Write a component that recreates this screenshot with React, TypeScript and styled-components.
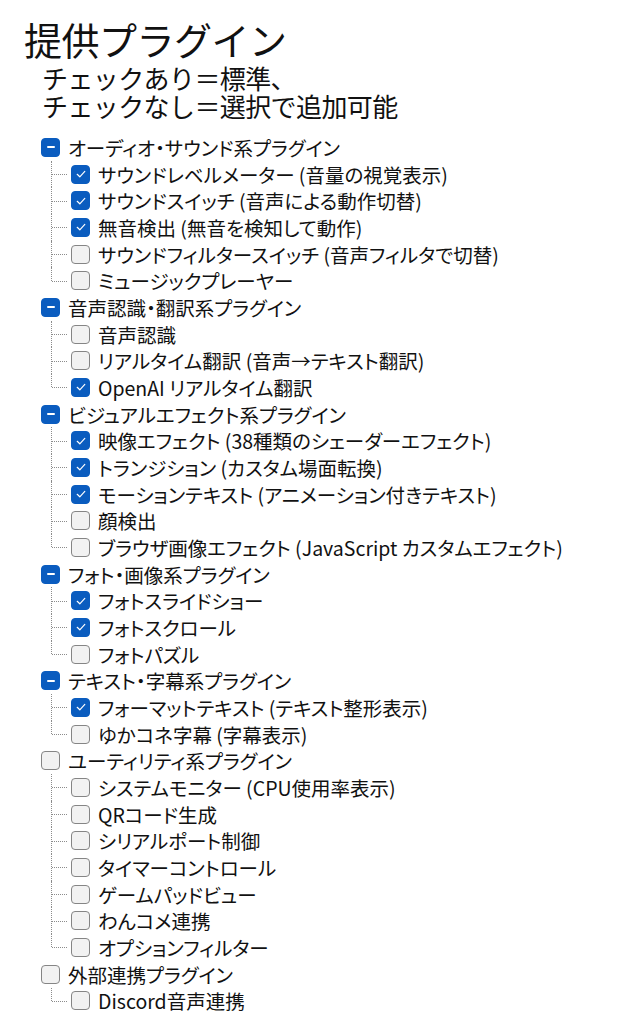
import styled, { createGlobalStyle } from "styled-components";

type State = "checked" | "unchecked" | "mixed";

interface Plugin {
  label: string;
  checked: boolean;
}

interface Group {
  label: string;
  state: State;
  items: Plugin[];
}

const groups: Group[] = [
  {
    label: "オーディオ・サウンド系プラグイン",
    state: "mixed",
    items: [
      { label: "サウンドレベルメーター (音量の視覚表示)", checked: true },
      { label: "サウンドスイッチ (音声による動作切替)", checked: true },
      { label: "無音検出 (無音を検知して動作)", checked: true },
      { label: "サウンドフィルタースイッチ (音声フィルタで切替)", checked: false },
      { label: "ミュージックプレーヤー", checked: false },
    ],
  },
  {
    label: "音声認識・翻訳系プラグイン",
    state: "mixed",
    items: [
      { label: "音声認識", checked: false },
      { label: "リアルタイム翻訳 (音声→テキスト翻訳)", checked: false },
      { label: "OpenAI リアルタイム翻訳", checked: true },
    ],
  },
  {
    label: "ビジュアルエフェクト系プラグイン",
    state: "mixed",
    items: [
      { label: "映像エフェクト (38種類のシェーダーエフェクト)", checked: true },
      { label: "トランジション (カスタム場面転換)", checked: true },
      { label: "モーションテキスト (アニメーション付きテキスト)", checked: true },
      { label: "顔検出", checked: false },
      { label: "ブラウザ画像エフェクト (JavaScript カスタムエフェクト)", checked: false },
    ],
  },
  {
    label: "フォト・画像系プラグイン",
    state: "mixed",
    items: [
      { label: "フォトスライドショー", checked: true },
      { label: "フォトスクロール", checked: true },
      { label: "フォトパズル", checked: false },
    ],
  },
  {
    label: "テキスト・字幕系プラグイン",
    state: "mixed",
    items: [
      { label: "フォーマットテキスト (テキスト整形表示)", checked: true },
      { label: "ゆかコネ字幕 (字幕表示)", checked: false },
    ],
  },
  {
    label: "ユーティリティ系プラグイン",
    state: "unchecked",
    items: [
      { label: "システムモニター (CPU使用率表示)", checked: false },
      { label: "QRコード生成", checked: false },
      { label: "シリアルポート制御", checked: false },
      { label: "タイマーコントロール", checked: false },
      { label: "ゲームパッドビュー", checked: false },
      { label: "わんコメ連携", checked: false },
      { label: "オプションフィルター", checked: false },
    ],
  },
  {
    label: "外部連携プラグイン",
    state: "unchecked",
    items: [{ label: "Discord音声連携", checked: false }],
  },
];

const ROW = 26.68;

const Global = createGlobalStyle`
  html, body {
    margin: 0;
    padding: 0;
    background: #ffffff;
  }
  body {
    font-family: "Noto Sans CJK JP", "Noto Sans", sans-serif;
    color: #111111;
  }
`;

const Page = styled.div`
  padding: 16px 0 0 24px;
`;

const Title = styled.h1`
  margin: 0;
  font-size: 38px;
  font-weight: 400;
  line-height: 46px;
  letter-spacing: -0.5px;
`;

const Note = styled.p`
  margin: 2px 0 0 18px;
  font-size: 26px;
  line-height: 28px;
  letter-spacing: -0.6px;
`;

const Tree = styled.ul`
  list-style: none;
  margin: 14px 0 0 17px;
  padding: 0;
`;

const Row = styled.div`
  display: flex;
  align-items: center;
  height: ${ROW}px;
  gap: 8px;
  font-size: 19.5px;
  font-feature-settings: "palt";
  white-space: nowrap;
`;

const Children = styled.ul`
  list-style: none;
  margin: 0;
  padding: 0;
`;

const ChildRow = styled.li`
  display: flex;
  align-items: center;
  height: ${ROW}px;
`;

const Connector = styled.span<{ $last: boolean }>`
  position: relative;
  flex: 0 0 30px;
  align-self: stretch;

  &::before {
    content: "";
    position: absolute;
    left: 10px;
    top: 0;
    height: ${(p) => (p.$last ? "50%" : "100%")};
    border-left: 1px dotted #8c8c8c;
  }

  &::after {
    content: "";
    position: absolute;
    left: 11px;
    top: 50%;
    width: 15px;
    border-top: 1px dotted #8c8c8c;
  }
`;

const Box = styled.span<{ $on: boolean }>`
  box-sizing: border-box;
  flex: 0 0 19px;
  width: 19px;
  height: 19px;
  border-radius: 4px;
  display: flex;
  align-items: center;
  justify-content: center;
  background: ${(p) => (p.$on ? "#0a5cbf" : "#f2f2f2")};
  border: 1.5px solid ${(p) => (p.$on ? "#0a5cbf" : "#858585")};
`;

const Dash = styled.span`
  width: 8px;
  height: 2px;
  border-radius: 1px;
  background: #ffffff;
`;

function Check({ state }: { state: State }) {
  return (
    <Box $on={state !== "unchecked"}>
      {state === "checked" && (
        <svg width="12" height="12" viewBox="0 0 12 12">
          <path
            d="M2.2 6.3 L4.8 8.8 L9.8 3.4"
            fill="none"
            stroke="#ffffff"
            strokeWidth="1.2"
            strokeLinecap="round"
            strokeLinejoin="round"
          />
        </svg>
      )}
      {state === "mixed" && <Dash />}
    </Box>
  );
}

export default function App() {
  return (
    <Page>
      <Global />
      <Title>提供プラグイン</Title>
      <Note>
        チェックあり＝標準、
        <br />
        チェックなし＝選択で追加可能
      </Note>
      <Tree>
        {groups.map((g) => (
          <li key={g.label}>
            <Row>
              <Check state={g.state} />
              <span>{g.label}</span>
            </Row>
            <Children>
              {g.items.map((it, i) => (
                <ChildRow key={it.label}>
                  <Connector $last={i === g.items.length - 1} />
                  <Row>
                    <Check state={it.checked ? "checked" : "unchecked"} />
                    <span>{it.label}</span>
                  </Row>
                </ChildRow>
              ))}
            </Children>
          </li>
        ))}
      </Tree>
    </Page>
  );
}
